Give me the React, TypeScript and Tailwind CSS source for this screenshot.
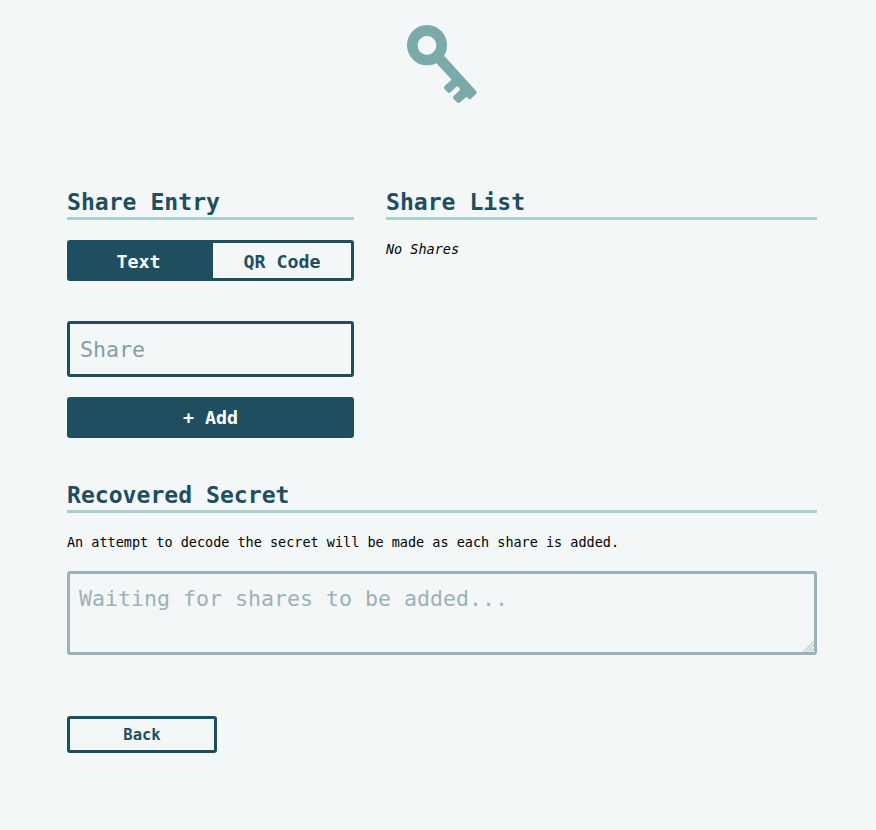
import type { ReactNode } from "react";

function KeyIcon() {
  return (
    <svg viewBox="0 0 300 315" className="h-[105px] w-[100px]" fill="#7aaaa9" aria-hidden="true">
      <path fillRule="evenodd" d="M111 45a60 60.5 0 1 0 .1 0ZM111 78a28 28 0 1 1-.1 0Z" />
      <path d="M138 158L163 138L259 244Q262 248 258 252L243 266Q239 269 236 266L230 260L210 277Q205 281 200 276L190 266Q187 262 191 258L209 241Q211 238 208 234Q204 229 199 230L182 247Q177 251 173 247L163 236Q160 232 164 228L185 209Z" />
    </svg>
  );
}

function ResizeGrip() {
  return (
    <svg
      viewBox="0 0 12 12"
      className="pointer-events-none absolute right-[3px] bottom-[3px] size-3"
      fill="none"
      stroke="#c9cccd"
      strokeWidth="1.3"
      aria-hidden="true"
    >
      <path d="M1.5 12L12 1.5M5 12L12 5M8.5 12L12 8.5" />
    </svg>
  );
}

function Heading({ children }: { children: ReactNode }) {
  return (
    <h2 className="h-[34px] border-b-3 border-[#a9cfcf] pt-px text-[23.1px] leading-[31px] font-bold whitespace-pre text-[#1f4e5f]">
      {children}
    </h2>
  );
}

export default function App() {
  return (
    <main className="h-[830px] bg-[#f3f7f8] px-[67px] pt-[10px] font-['DejaVu_Sans_Mono',monospace] text-[13.49px] leading-5 text-black">
      <div className="ml-[323px] h-[176px]">
        <KeyIcon />
      </div>
      <div className="flex w-[750px] gap-8">
        <section className="w-[287px]">
          <Heading>Share Entry</Heading>
          <div className="mt-5 flex h-[41px] overflow-hidden rounded-[3px] border-3 border-[#1f4e5f] text-[18.3px] font-bold">
            <button className="w-[143px] bg-[#1f4e5f] pt-[3px] pr-[6px] text-white">Text</button>
            <button className="flex-1 pt-[3px] text-[#1f4e5f]">QR Code</button>
          </div>
          <input
            placeholder="Share"
            className="mt-10 block h-14 w-full rounded-[3px] border-3 border-[#1f4e5f] bg-transparent px-[10px] text-[21.6px] placeholder:text-[#839da7] outline-none"
          />
          <button className="mt-5 block h-[41px] w-full rounded-[3px] bg-[#1f4e5f] text-[18.3px] font-bold text-white">
            + Add
          </button>
        </section>
        <section className="w-[431px]">
          <Heading>Share List</Heading>
          <p className="mt-[19px] italic">No Shares</p>
        </section>
      </div>
      <section className="mt-[41px] w-[750px]">
        <Heading>Recovered Secret</Heading>
        <p className="mt-[19px]">An attempt to decode the secret will be made as each share is added.</p>
        <div className="relative mt-[19px]">
          <textarea
            placeholder="Waiting for shares to be added..."
            className="block h-[84px] w-full resize-none rounded-[3px] border-3 border-[#9db1b9] bg-transparent px-[9px] py-[9px] text-[21.6px] leading-8 placeholder:text-[#9db1b9] outline-none"
          />
          <ResizeGrip />
        </div>
        <button className="mt-[61px] block h-[37px] w-[150px] rounded-[3px] border-3 border-[#1f4e5f] text-[15.5px] font-bold text-[#1f4e5f]">
          Back
        </button>
      </section>
    </main>
  );
}
